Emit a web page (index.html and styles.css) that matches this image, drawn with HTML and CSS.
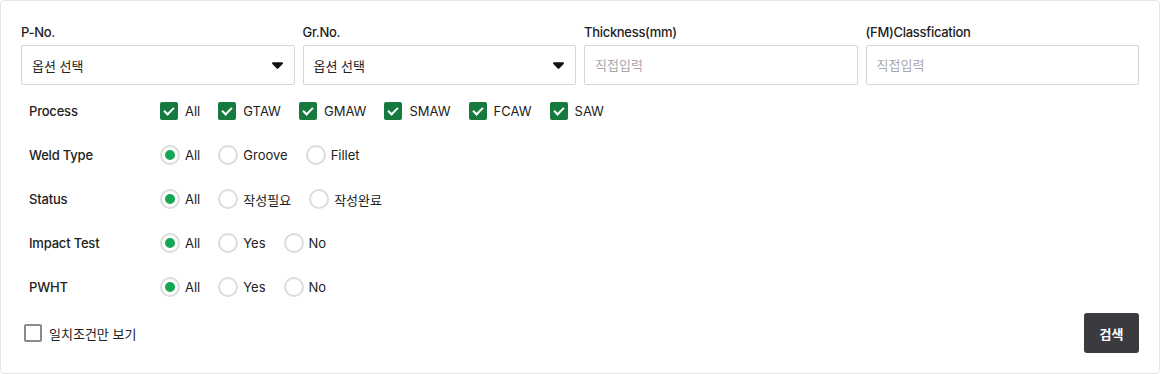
FILE: index.html
```html
<!DOCTYPE html>
<html lang="ko">
<head>
    <meta charset="UTF-8">
    <meta name="viewport" content="width=device-width, initial-scale=1.0">
    <title>WPS Search</title>
    <link rel="stylesheet" href="styles.css">
</head>
<body>
    <div class="search-panel">
        <div class="field-grid">
            <div class="field">
                <div class="field-label">P-No.</div>
                <div class="select-box">
                    <span>옵션 선택</span>
                    <svg class="caret" viewBox="0 192 320 192"><path d="M137.4 374.6c12.5 12.5 32.8 12.5 45.3 0l128-128c9.2-9.2 11.9-22.9 6.9-34.9s-16.6-19.8-29.6-19.8L32 192c-12.9 0-24.6 7.8-29.6 19.8s-2.2 25.7 6.9 34.9l128 128z"/></svg>
                </div>
            </div>
            <div class="field">
                <div class="field-label">Gr.No.</div>
                <div class="select-box">
                    <span>옵션 선택</span>
                    <svg class="caret" viewBox="0 192 320 192"><path d="M137.4 374.6c12.5 12.5 32.8 12.5 45.3 0l128-128c9.2-9.2 11.9-22.9 6.9-34.9s-16.6-19.8-29.6-19.8L32 192c-12.9 0-24.6 7.8-29.6 19.8s-2.2 25.7 6.9 34.9l128 128z"/></svg>
                </div>
            </div>
            <div class="field">
                <div class="field-label">Thickness(mm)</div>
                <input class="text-input" type="text" placeholder="직접입력">
            </div>
            <div class="field">
                <div class="field-label">(FM)Classfication</div>
                <input class="text-input" type="text" placeholder="직접입력">
            </div>
        </div>

        <div class="option-row">
            <div class="row-label">Process</div>
            <div class="choices">
                <label class="choice"><span class="check on"></span>All</label>
                <label class="choice"><span class="check on"></span>GTAW</label>
                <label class="choice"><span class="check on"></span>GMAW</label>
                <label class="choice"><span class="check on"></span>SMAW</label>
                <label class="choice"><span class="check on"></span>FCAW</label>
                <label class="choice"><span class="check on"></span>SAW</label>
            </div>
        </div>

        <div class="option-row">
            <div class="row-label">Weld Type</div>
            <div class="choices">
                <label class="choice"><span class="radio on"></span>All</label>
                <label class="choice"><span class="radio"></span>Groove</label>
                <label class="choice"><span class="radio"></span>Fillet</label>
            </div>
        </div>

        <div class="option-row">
            <div class="row-label">Status</div>
            <div class="choices">
                <label class="choice"><span class="radio on"></span>All</label>
                <label class="choice"><span class="radio"></span>작성필요</label>
                <label class="choice"><span class="radio"></span>작성완료</label>
            </div>
        </div>

        <div class="option-row">
            <div class="row-label">Impact Test</div>
            <div class="choices">
                <label class="choice"><span class="radio on"></span>All</label>
                <label class="choice"><span class="radio"></span>Yes</label>
                <label class="choice"><span class="radio"></span>No</label>
            </div>
        </div>

        <div class="option-row">
            <div class="row-label">PWHT</div>
            <div class="choices">
                <label class="choice"><span class="radio on"></span>All</label>
                <label class="choice"><span class="radio"></span>Yes</label>
                <label class="choice"><span class="radio"></span>No</label>
            </div>
        </div>

        <div class="panel-footer">
            <label class="choice match-only"><span class="check"></span>일치조건만 보기</label>
            <button class="search-btn" type="button">검색</button>
        </div>
    </div>
</body>
</html>
```

FILE: styles.css
```css
body {
    margin: 0;
    background-color: #ffffff;
    font-family: Inter, "Noto Sans CJK KR", sans-serif;
    font-size: 13px;
    color: #222222;
}

.search-panel {
    box-sizing: border-box;
    width: 1160px;
    height: 374px;
    padding: 22px 20px 0 20px;
    border: 1px solid #e6e6e6;
    border-radius: 4px;
}

/* -- Top fields -- */

.field-grid {
    display: grid;
    grid-template-columns: repeat(4, 1fr);
    gap: 8px;
}

.field-label {
    height: 18px;
    line-height: 18px;
    margin-bottom: 4px;
    font-weight: 500;
    letter-spacing: -0.3px;
    color: #222222;
}

.select-box,
.text-input {
    box-sizing: border-box;
    width: 100%;
    height: 40px;
    border: 1px solid #d6d6d6;
    border-radius: 2px;
    background-color: #ffffff;
}

.select-box {
    display: flex;
    align-items: center;
    justify-content: space-between;
    padding: 0 11px 0 10px;
    color: #222222;
}

.caret {
    width: 11px;
    height: 7px;
    fill: #111111;
}

.text-input {
    padding: 0 10px;
    font-family: inherit;
    font-size: 13px;
    color: #222222;
    outline: none;
}

.text-input::placeholder {
    color: #a8a8a8;
}

/* -- Option rows -- */

.option-row {
    display: flex;
    align-items: center;
    height: 44px;
}

.field-grid + .option-row {
    margin-top: 4px;
}

.row-label {
    width: 131px;
    padding-left: 8px;
    font-weight: 500;
    letter-spacing: -0.2px;
}

.choices {
    display: flex;
    align-items: center;
    gap: 18px;
}

.choice {
    display: inline-flex;
    align-items: center;
    gap: 7px;
    cursor: pointer;
}

.check {
    box-sizing: border-box;
    position: relative;
    width: 18px;
    height: 18px;
    border: 2px solid #8a8a8a;
    border-radius: 2px;
}

.check.on {
    border-color: #167a3e;
    background-color: #167a3e;
}

.check.on::after {
    content: "";
    position: absolute;
    left: 4px;
    top: 1px;
    width: 4px;
    height: 8px;
    border: solid #ffffff;
    border-width: 0 2px 2px 0;
    transform: rotate(45deg);
}

.radio {
    box-sizing: border-box;
    position: relative;
    width: 20px;
    height: 20px;
    border: 2px solid #dcdcdc;
    border-radius: 50%;
    margin-right: -2px;
}

.radio.on::after {
    content: "";
    position: absolute;
    left: 3px;
    top: 3px;
    width: 10px;
    height: 10px;
    border-radius: 50%;
    background-color: #17a558;
}

/* -- Footer -- */

.panel-footer {
    display: flex;
    align-items: center;
    justify-content: space-between;
    margin-top: 4px;
}

.match-only {
    padding-left: 3px;
}

.search-btn {
    width: 55px;
    height: 40px;
    border: none;
    border-radius: 3px;
    background-color: #3a3b3e;
    color: #ffffff;
    font-family: inherit;
    font-size: 13px;
    font-weight: 700;
    cursor: pointer;
}
```
